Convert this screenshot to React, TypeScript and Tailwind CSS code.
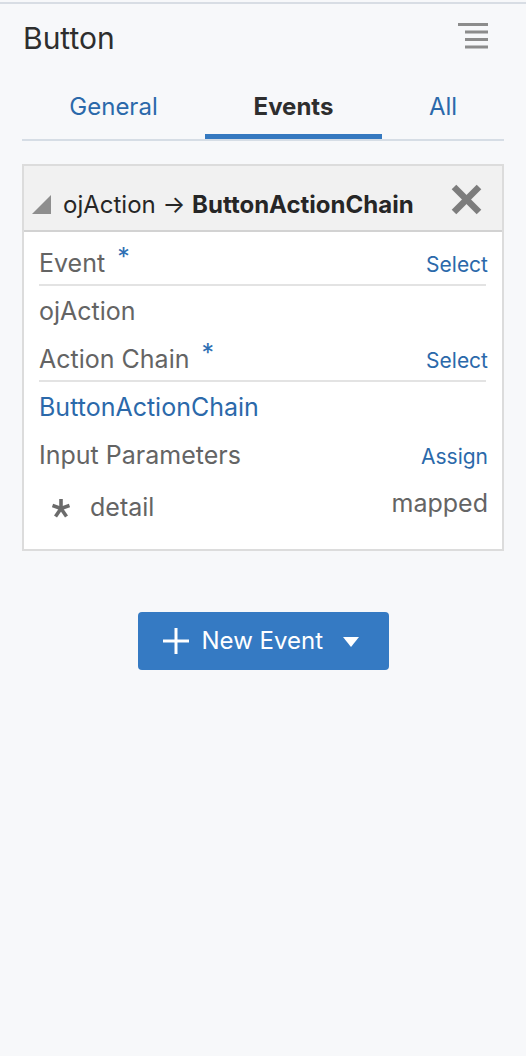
import React from "react";

const font = { fontFamily: "Inter, 'Noto Sans', 'Liberation Sans', sans-serif" };

const Asterisk: React.FC = () => (
  <svg width="18" height="20" viewBox="0 0 18 20" className="shrink-0 mt-[20px]">
    <g stroke="#6b6b6b" strokeWidth="3.6" strokeLinecap="butt">
      <line x1="9" y1="10.5" x2="9" y2="1" />
      <line x1="9" y1="10.5" x2="0.5" y2="7.5" />
      <line x1="9" y1="10.5" x2="17.5" y2="7.5" />
      <line x1="9" y1="10.5" x2="3.5" y2="18.5" />
      <line x1="9" y1="10.5" x2="14.5" y2="18.5" />
    </g>
  </svg>
);

const FieldHeader: React.FC<{ label: string; action: string }> = ({ label, action }) => (
  <div className="flex items-baseline justify-between h-[48px] leading-[51px] border-b-2 border-[#e3e3e3]">
    <span className="text-[25px] text-[#646464]">
      {label}
      <span className="relative -top-[6px] ml-[12px] text-[#2f6fb3]">*</span>
    </span>
    <span className="text-[21px] text-[#2b69aa] mr-[-2px]">{action}</span>
  </div>
);

export default function App() {
  return (
    <div className="min-h-[1056px] w-full bg-[#f7f8fa] pt-[2px]" style={font}>
      <div className="h-[2px] bg-[#d8dde4]" />

      <div className="flex items-center justify-between h-[68px] pl-[23px] pr-[37px]">
        <span className="text-[30px] text-[#2e2e2e]">Button</span>
        <svg width="32" height="26" viewBox="0 0 32 26" className="-mt-[4px]">
          <g fill="#8c8c8c">
            <rect x="1" y="0" width="30" height="3" />
            <rect x="8" y="7.5" width="23" height="3" />
            <rect x="8" y="15" width="23" height="3" />
            <rect x="8" y="22.5" width="23" height="3" />
          </g>
        </svg>
      </div>

      <div className="mx-[22px] flex border-b-2 border-[#d6dde5] h-[69px]">
        <div className="w-[183px] flex items-center justify-center pt-[3px] text-[24px] text-[#2b69aa]">General</div>
        <div className="w-[177px] flex items-center justify-center text-[24px] font-bold text-[#2e2e2e] border-b-[5px] border-[#3579c0] pt-[8px]">
          Events
        </div>
        <div className="flex-1 flex items-center justify-center pt-[3px] text-[24px] text-[#2b69aa]">All</div>
      </div>

      <div className="mx-[22px] mt-[23px] border-2 border-[#dcdcdc] bg-white">
        <div className="flex items-center h-[66px] bg-[#f1f1f1] border-b-2 border-[#d2d2d2] pl-[8px] pr-[20px]">
          <svg width="20" height="20" viewBox="0 0 20 20" className="shrink-0 mt-[14px]">
            <polygon points="0,19 19,0 19,19" fill="#8e8e8e" />
          </svg>
          <span className="ml-[11px] mt-[13px] text-[24px] text-[#262626] whitespace-nowrap">
            ojAction → <span className="font-bold">ButtonActionChain</span>
          </span>
          <svg width="31" height="31" viewBox="0 0 31 31" className="ml-auto shrink-0 mt-[3px]">
            <g stroke="#7d7d7d" strokeWidth="6.5">
              <line x1="3" y1="3" x2="28" y2="28" />
              <line x1="28" y1="3" x2="3" y2="28" />
            </g>
          </svg>
        </div>

        <div className="pl-[15px] pr-[16px] pt-[6px] pb-[23px]">
          <FieldHeader label="Event" action="Select" />
          <div className="h-[48px] leading-[51px] text-[25px] text-[#646464]">ojAction</div>
          <FieldHeader label="Action Chain" action="Select" />
          <div className="h-[48px] leading-[51px] text-[25px] text-[#2b69aa]">ButtonActionChain</div>
          <div className="flex items-baseline justify-between h-[48px] leading-[51px]">
            <span className="text-[25px] text-[#646464]">Input Parameters</span>
            <span className="text-[21px] text-[#2b69aa] mr-[-2px]">Assign</span>
          </div>
          <div className="flex items-start justify-between h-[48px] leading-[51px]">
            <div className="flex items-start pl-[13px]">
              <Asterisk />
              <span className="relative top-[4px] ml-[20px] text-[25px] text-[#646464]">detail</span>
            </div>
            <span className="text-[25px] text-[#646464] mr-[-2px]">mapped</span>
          </div>
        </div>
      </div>

      <div className="flex justify-center mt-[61px]">
        <button className="flex items-center w-[251px] h-[58px] rounded-[4px] bg-[#357ac3] pl-[25px] text-white">
          <svg width="26" height="26" viewBox="0 0 26 26" className="shrink-0">
            <g stroke="#ffffff" strokeWidth="3">
              <line x1="13" y1="0" x2="13" y2="26" />
              <line x1="0" y1="13" x2="26" y2="13" />
            </g>
          </svg>
          <span className="ml-[13px] text-[24px]">New Event</span>
          <svg width="16" height="10" viewBox="0 0 16 10" className="ml-[20px] shrink-0 mt-[2px]">
            <polygon points="0,0 16,0 8,10" fill="#ffffff" />
          </svg>
        </button>
      </div>
    </div>
  );
}
